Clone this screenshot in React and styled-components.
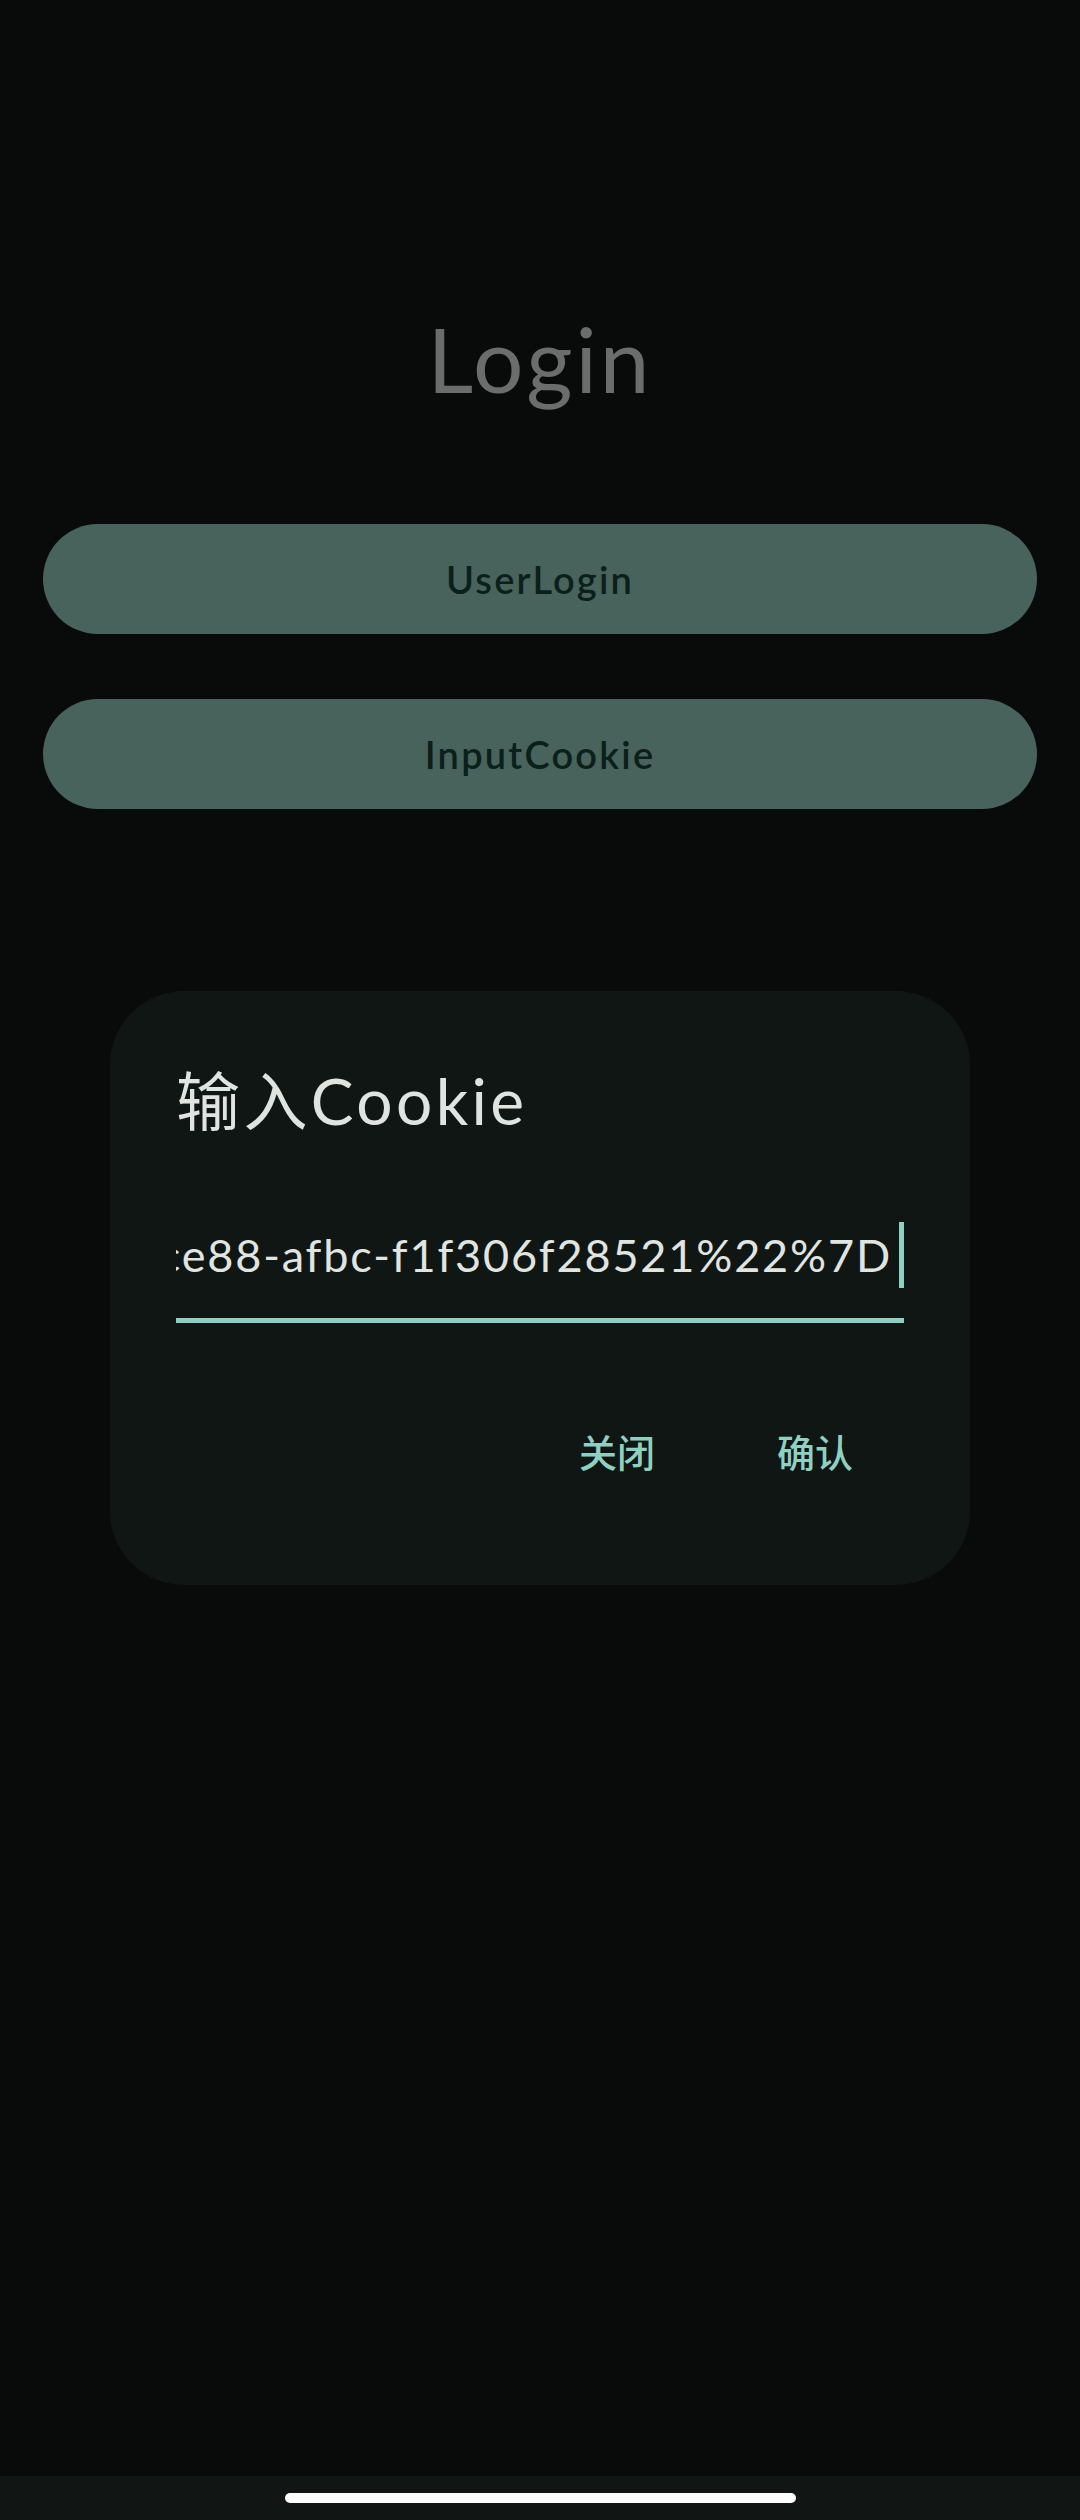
import React from "react";
import styled, { createGlobalStyle } from "styled-components";

const Global = createGlobalStyle`
  html, body {
    margin: 0;
    padding: 0;
    background: #080b0a;
  }
  body {
    font-family: Lato, "Noto Sans CJK SC", sans-serif;
  }
  * { box-sizing: border-box; }
`;

const Screen = styled.div`
  width: 1080px;
  height: 2520px;
  background: #080b0a;
  display: flex;
  flex-direction: column;
  overflow: hidden;
`;

const Content = styled.main`
  flex: 1;
  display: flex;
  flex-direction: column;
  padding: 309px 43px 0;
`;

const Title = styled.h1`
  margin: 0;
  height: 100px;
  line-height: 100px;
  font-size: 89px;
  font-weight: 400;
  letter-spacing: 3px;
  text-align: center;
  color: #6a6d6b;
  font-family: Lato, sans-serif;
`;

const Actions = styled.div`
  margin-top: 115px;
  display: flex;
  flex-direction: column;
  gap: 65px;
`;

const PillButton = styled.button`
  height: 110px;
  border: none;
  border-radius: 55px;
  background: #47635c;
  color: #0c1f1a;
  font-family: Lato, sans-serif;
  font-size: 38px;
  font-weight: 600;
  letter-spacing: 2.2px;
  display: flex;
  align-items: center;
  justify-content: center;
  padding: 0;
`;

const Dialog = styled.section`
  margin: 182px 67px 0;
  background: #101614;
  border-radius: 74px;
  padding: 70px 66px 94px;
  display: flex;
  flex-direction: column;
`;

const DialogTitle = styled.h2`
  margin: 0;
  height: 80px;
  line-height: 80px;
  font-size: 64px;
  font-weight: 400;
  letter-spacing: 3.4px;
  color: #dfe4e1;
  font-family: Lato, "Noto Sans CJK SC", sans-serif;
  white-space: nowrap;
`;

const Field = styled.div`
  margin-top: 81px;
  height: 101px;
  padding-bottom: 30px;
  border-bottom: 5px solid #8fd0c2;
  display: flex;
  align-items: stretch;
`;

const FieldText = styled.div`
  flex: 1;
  min-width: 0;
  overflow: hidden;
  display: flex;
  justify-content: flex-end;
`;

const FieldValue = styled.span`
  flex: none;
  white-space: nowrap;
  font-family: Lato, sans-serif;
  font-size: 45px;
  line-height: 66px;
  letter-spacing: 1.85px;
  color: #e1e5e2;
`;

const Caret = styled.span`
  flex: none;
  width: 5px;
  margin-left: 7px;
  background: #8fd0c2;
`;

const ButtonRow = styled.div`
  margin-top: 88px;
  height: 80px;
  display: flex;
  justify-content: flex-end;
  gap: 70px;
  padding-right: 25px;
`;

const TextButton = styled.button`
  border: none;
  background: transparent;
  padding: 0 26px;
  height: 80px;
  line-height: 80px;
  font-family: "Noto Sans CJK SC", sans-serif;
  font-size: 38px;
  font-weight: 500;
  color: #8fd0c2;
`;

const NavBar = styled.div`
  height: 44px;
  background: #111614;
  display: flex;
  justify-content: center;
  padding-top: 17px;
`;

const Handle = styled.div`
  width: 511px;
  height: 10px;
  border-radius: 5px;
  background: #ffffff;
`;

export default function App() {
  return (
    <>
      <Global />
      <Screen>
        <Content>
          <Title>Login</Title>
          <Actions>
            <PillButton>UserLogin</PillButton>
            <PillButton>InputCookie</PillButton>
          </Actions>
          <Dialog>
            <DialogTitle>输入Cookie</DialogTitle>
            <Field>
              <FieldText>
                <FieldValue>%7B%22uuid%22%3A%22b81c2d04-77c3-4ce88-afbc-f1f306f28521%22%7D</FieldValue>
              </FieldText>
              <Caret />
            </Field>
            <ButtonRow>
              <TextButton>关闭</TextButton>
              <TextButton>确认</TextButton>
            </ButtonRow>
          </Dialog>
        </Content>
        <NavBar>
          <Handle />
        </NavBar>
      </Screen>
    </>
  );
}
